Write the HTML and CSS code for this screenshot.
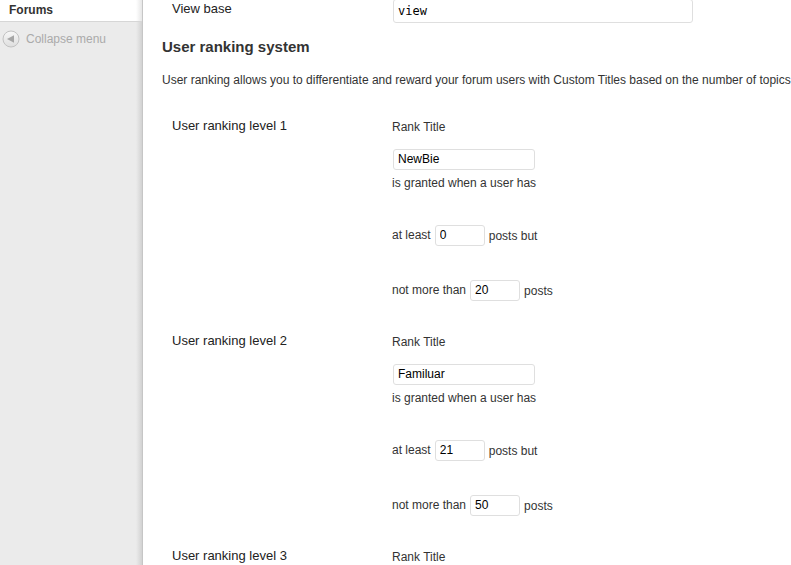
FILE: index.html
```
<!DOCTYPE html>
<html lang="en">
<head>
<meta charset="utf-8">
<title>Forums</title>
<link rel="stylesheet" href="styles.css">
</head>
<body>
<nav class="sidebar">
  <a class="menu-item" href="#forums">Forums</a>
  <button class="collapse" type="button">
    <svg class="collapse-icon" viewBox="0 0 18 18" aria-hidden="true">
      <defs>
        <linearGradient id="disc" x1="0" y1="0" x2="0" y2="1">
          <stop offset="0" stop-color="#f8f8f8"/>
          <stop offset="1" stop-color="#dedede"/>
        </linearGradient>
      </defs>
      <circle cx="9" cy="9" r="8" fill="url(#disc)" stroke="#c2c2c2"/>
      <path d="M5 9 L12 5.2 V12.8 Z" fill="#a6a6a6"/>
    </svg>
    <span>Collapse menu</span>
  </button>
</nav>
<main class="content">
  <div class="row base-row">
    <label class="row-label" for="view-base">View base</label>
    <input class="base-input" id="view-base" type="text" value="view">
  </div>
  <h3 class="heading">User ranking system</h3>
  <p class="intro">User ranking allows you to differentiate and reward your forum users with Custom Titles based on the number of topics</p>

  <section class="row rank">
    <h4 class="row-label">User ranking level 1</h4>
    <div class="fields">
      <label class="line" for="title-1">Rank Title</label>
      <input class="title-input" id="title-1" type="text" value="NewBie">
      <p class="line granted">is granted when a user has</p>
      <div class="limit"><label for="min-1">at least</label><input class="count" id="min-1" type="text" value="0"><span class="unit">posts but</span></div>
      <div class="limit"><label for="max-1">not more than</label><input class="count" id="max-1" type="text" value="20"><span class="unit">posts</span></div>
    </div>
  </section>

  <section class="row rank">
    <h4 class="row-label">User ranking level 2</h4>
    <div class="fields">
      <label class="line" for="title-2">Rank Title</label>
      <input class="title-input" id="title-2" type="text" value="Familuar">
      <p class="line granted">is granted when a user has</p>
      <div class="limit"><label for="min-2">at least</label><input class="count" id="min-2" type="text" value="21"><span class="unit">posts but</span></div>
      <div class="limit"><label for="max-2">not more than</label><input class="count" id="max-2" type="text" value="50"><span class="unit">posts</span></div>
    </div>
  </section>

  <section class="row rank">
    <h4 class="row-label">User ranking level 3</h4>
    <div class="fields">
      <span class="line">Rank Title</span>
    </div>
  </section>
</main>
</body>
</html>
```
FILE: styles.css
```
* {
  box-sizing: border-box;
}

body {
  margin: 0;
  display: flex;
  height: 100vh;
  overflow: hidden;
  background: #fff;
  color: #333;
  font: 12px/20px "Liberation Sans", Arial, sans-serif;
}

h3, h4, p {
  margin: 0;
}

.sidebar {
  flex: 0 0 143px;
  border-right: 1px solid #c6c6c6;
  background: linear-gradient(to left, #d2d2d2, #ebebeb 6px);
}

.menu-item {
  display: block;
  height: 22px;
  padding-left: 9px;
  border-bottom: 1px solid #d6d6d6;
  background: linear-gradient(to left, #e6e6e6, #fff 6px);
  color: #333;
  font-size: 12px;
  font-weight: bold;
  text-decoration: none;
}

.collapse {
  display: flex;
  align-items: center;
  gap: 6px;
  margin-top: 7px;
  padding: 0 0 0 2px;
  border: 0;
  background: none;
  color: #aaa;
  font: inherit;
}

.collapse-icon {
  width: 18px;
  height: 18px;
}

.content {
  flex: 1;
  min-width: 0;
  margin-top: -1px;
  padding-left: 19px;
}

.row {
  display: grid;
  grid-template-columns: 220px 1fr;
  padding-left: 10px;
  align-items: start;
}

.row-label {
  color: #222;
  font-size: 13px;
  font-weight: normal;
  line-height: 18px;
}

.base-row .row-label {
  line-height: 20px;
}

input {
  display: block;
  height: 21px;
  margin: 0;
  padding: 0 4px 2px;
  border: 1px solid #dfdfdf;
  border-radius: 3px;
  background: #fff;
  color: #000;
  font: 12px "Liberation Sans", Arial, sans-serif;
}

.base-input {
  width: 300px;
  height: 24px;
  margin-left: 1px;
  padding-bottom: 0;
  font-family: "DejaVu Sans Mono", monospace;
}

.heading {
  margin-top: 14px;
  font-size: 15px;
  line-height: 20px;
}

.intro {
  margin: 13px 0 27px;
  white-space: nowrap;
}

.rank {
  padding-bottom: 31px;
}

.line {
  display: block;
}

.title-input {
  width: 142px;
  margin: 12px 0 3px 1px;
}

.limit {
  display: flex;
  align-items: center;
  gap: 4px;
  margin-top: 34px;
}

.limit label {
  padding-bottom: 2px;
  line-height: 18px;
}

.granted + .limit {
  margin-top: 32px;
}

.count {
  width: 50px;
}
```
